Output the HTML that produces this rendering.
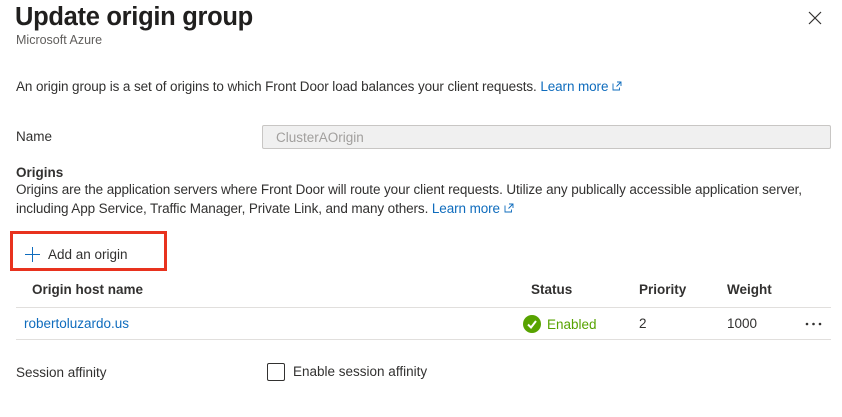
<!DOCTYPE html>
<html><head><style>
*{margin:0;padding:0;box-sizing:border-box}
body{width:842px;height:417px;background:#fff;font-family:"Liberation Sans",sans-serif;color:#323130;font-size:13.5px;position:relative;overflow:hidden}
.a{position:absolute;white-space:nowrap}
.l{color:#0f6cbd}
.ext{display:inline-block;width:10px;height:10px;position:relative;top:0px;margin-left:4px}
</style></head><body>
<div class="a" style="left:15px;top:3px;font-size:25.5px;font-weight:600;color:#201f1e;letter-spacing:-0.3px">Update origin group</div>
<div class="a" style="left:16px;top:33px;font-size:12.5px;color:#605e5c">Microsoft Azure</div>
<svg class="a" style="left:808px;top:11px" width="14" height="14"><path d="M1 1L13 13M13 1L1 13" stroke="#323130" stroke-width="1.2"/></svg>
<div class="a" style="left:16px;top:79px;letter-spacing:-0.1px">An origin group is a set of origins to which Front Door load balances your client requests. <span class="l">Learn more</span><svg class="ext" viewBox="0 0 10 10"><path d="M1 2.5V9H7.5V6.5M5 1H9V5M9 1L4.5 5.5" fill="none" stroke="#0f6cbd" stroke-width="0.9"/></svg></div>
<div class="a" style="left:16px;top:129px">Name</div>
<div class="a" style="left:262px;top:125px;width:569px;height:24px;background:#f0f0f0;border:1px solid #c8c6c4;border-radius:2px;padding:4px 0 0 13px;color:#a19f9d">ClusterAOrigin</div>
<div class="a" style="left:16px;top:165px;font-weight:600">Origins</div>
<div class="a" style="left:16px;top:182px;letter-spacing:-0.1px">Origins are the application servers where Front Door will route your client requests. Utilize any publically accessible application server,</div>
<div class="a" style="left:16px;top:201px;letter-spacing:-0.1px">including App Service, Traffic Manager, Private Link, and many others. <span class="l">Learn more</span><svg class="ext" viewBox="0 0 10 10"><path d="M1 2.5V9H7.5V6.5M5 1H9V5M9 1L4.5 5.5" fill="none" stroke="#0f6cbd" stroke-width="0.9"/></svg></div>
<div class="a" style="left:10px;top:231px;width:157px;height:40px;border:3px solid #e8321e"></div>
<svg class="a" style="left:25px;top:247px" width="15" height="15"><path d="M7.5 0V15M0 7.5H15" stroke="#0f6cbd" stroke-width="1"/></svg>
<div class="a" style="left:48px;top:247px">Add an origin</div>
<div class="a" style="left:32px;top:282px;font-weight:600">Origin host name</div>
<div class="a" style="left:531px;top:282px;font-weight:600">Status</div>
<div class="a" style="left:639px;top:282px;font-weight:600">Priority</div>
<div class="a" style="left:727px;top:282px;font-weight:600">Weight</div>
<div class="a" style="left:16px;top:307px;width:815px;height:1px;background:#e1dfdd"></div>
<div class="a l" style="left:24px;top:316px">robertoluzardo.us</div>
<svg class="a" style="left:523px;top:315px" width="18" height="18"><circle cx="9" cy="9" r="9" fill="#57a300"/><path d="M5 9.5L8 12.5L13 6" fill="none" stroke="#fff" stroke-width="2"/></svg>
<div class="a" style="left:547px;top:317px;color:#57a300">Enabled</div>
<div class="a" style="left:639px;top:316px">2</div>
<div class="a" style="left:727px;top:316px">1000</div>
<svg class="a" style="left:805px;top:322px" width="18" height="4"><circle cx="2" cy="2" r="1.3" fill="#323130"/><circle cx="8.5" cy="2" r="1.3" fill="#323130"/><circle cx="15" cy="2" r="1.3" fill="#323130"/></svg>
<div class="a" style="left:16px;top:339px;width:815px;height:1px;background:#e1dfdd"></div>
<div class="a" style="left:16px;top:365px">Session affinity</div>
<div class="a" style="left:267px;top:363px;width:18px;height:18px;border:1px solid #323130;border-radius:2px"></div>
<div class="a" style="left:293px;top:364px">Enable session affinity</div>
</body></html>
